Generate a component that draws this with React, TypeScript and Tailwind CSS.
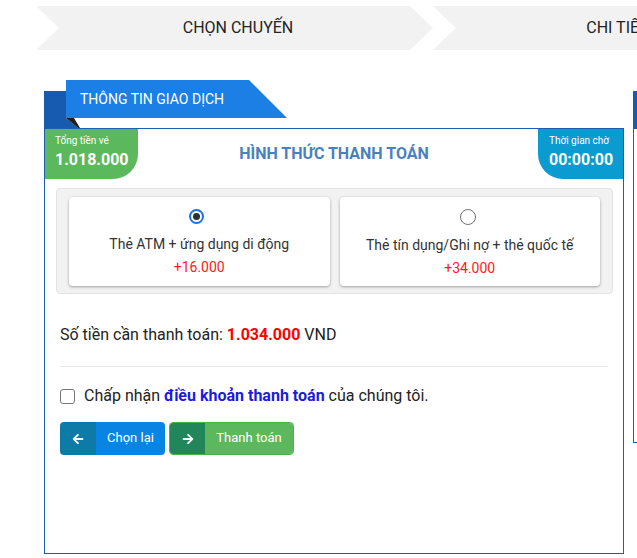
import React from "react";
import { FaArrowLeft, FaArrowRight } from "react-icons/fa";

function Chevron({ label, extra }: { label: string; extra?: boolean }) {
  return (
    <div
      className={
        extra
          ? "shrink-0 w-[397px] h-[44px] bg-[#f2f2f2] [clip-path:polygon(0_0,calc(100%_-_23px)_0,100%_50%,calc(100%_-_23px)_100%,0_100%,23px_50%)] flex items-center justify-center pl-[30px] pr-[35px] text-[16px] text-[#222] whitespace-nowrap"
          : "shrink-0 w-[397px] h-[44px] bg-[#f2f2f2] [clip-path:polygon(0_0,calc(100%_-_23px)_0,100%_50%,calc(100%_-_23px)_100%,0_100%,23px_50%)] flex items-center justify-center pl-[30px] pr-[23px] text-[16px] text-[#222] whitespace-nowrap"
      }
    >
      {label}
    </div>
  );
}

function Radio({ checked }: { checked: boolean }) {
  return checked ? (
    <span className="mr-[5px] w-[15px] h-[15px] rounded-full border-2 border-[#1a73e8] flex items-center justify-center bg-white">
      <span className="w-[7px] h-[7px] rounded-full bg-[#2b2f36]" />
    </span>
  ) : (
    <span className="mr-[4px] w-[16px] h-[16px] rounded-full border border-[#767676] bg-white" />
  );
}

function Card({ checked, label, fee }: { checked: boolean; label: string; fee: string }) {
  return (
    <div className="flex-1 h-[89px] bg-white rounded-[4px] shadow-[0_1px_3px_rgba(0,0,0,0.35)] flex flex-col items-center pt-[12px]">
      <Radio checked={checked} />
      <div className="mt-[9px] text-[14px] leading-[23px] text-[#333]">{label}</div>
      <div className="text-[14px] leading-[23px] text-[#ff1a1a]">{fee}</div>
    </div>
  );
}

export default function App() {
  return (
    <div className="w-[637px] h-[558px] overflow-hidden bg-white font-['Roboto','Liberation_Sans',sans-serif] text-[#333]">
      <div className="flex pt-[6px] pl-[36px]">
        <Chevron label="CHỌN CHUYẾN" />
        <Chevron label="CHI TIẾT VÉ" extra />
      </div>

      <div className="flex mt-[30px]">
        <div className="ml-[44px] w-[580px] shrink-0">
          <div className="flex h-[48px]">
            <div className="mt-[11px] w-[22px] h-[37px] bg-[#175bb0]" />
            <div className="flex flex-col">
              <div className="h-[38px] w-[221px] bg-[#1c7fe6] [clip-path:polygon(0_0,183px_0,100%_100%,0_100%)] flex items-center pl-[14px] text-white text-[14px] whitespace-nowrap">
                THÔNG TIN GIAO DỊCH
              </div>
              <svg width="14" height="10" viewBox="0 0 14 10" className="block">
                <polygon points="0,0 12,10 0,10" fill="#175bb0" />
                <polygon points="0,0 8,0 14,10 12,10" fill="#1f1f1f" />
              </svg>
            </div>
          </div>

          <div className="h-[426px] border border-[#1a5fb4]">
            <div className="grid grid-cols-[1fr_auto_1fr] items-center">
              <div className="justify-self-start w-[93px] h-[50px] bg-[#5cb85c] rounded-br-[25px] pl-[10px] pt-[6px] text-white">
                <div className="text-[10px] leading-[12px]">Tổng tiền vé</div>
                <div className="mt-[3px] text-[16px] leading-[20px] font-bold">1.018.000</div>
              </div>
              <div className="text-[16px] font-bold text-[#4a7fc1] whitespace-nowrap">HÌNH THỨC THANH TOÁN</div>
              <div className="justify-self-end w-[85px] h-[50px] bg-[#0a9bd0] rounded-bl-[25px] pl-[11px] pt-[6px] text-white">
                <div className="text-[10px] leading-[12px]">Thời gian chờ</div>
                <div className="mt-[3px] text-[16px] leading-[20px] font-bold">00:00:00</div>
              </div>
            </div>

            <div className="mt-[9px] ml-[11px] mr-[10px] bg-[#f2f2f2] border border-[#e3e3e3] rounded-[4px] px-[12px] pt-[8px] pb-[7px] flex gap-[10px]">
              <Card checked label="Thẻ ATM + ứng dụng di động" fee="+16.000" />
              <Card checked={false} label="Thẻ tín dụng/Ghi nợ + thẻ quốc tế" fee="+34.000" />
            </div>

            <div className="mt-[29px] px-[15px] text-[16px] leading-[24px] text-[#222]">
              Số tiền cần thanh toán: <span className="font-bold text-[#ff0000]">1.034.000</span> VND
            </div>

            <div className="mt-[19px] mx-[15px] border-t border-[#e6e6e6]" />

            <div className="mt-[17px] px-[15px] h-[24px] flex items-center gap-[9px] text-[16px] text-[#222]">
              <span className="w-[15px] h-[15px] rounded-[3px] border border-[#767676] bg-white shrink-0" />
              <span>
                Chấp nhận <span className="font-bold text-[#1a1ae6]">điều khoản thanh toán</span> của chúng tôi.
              </span>
            </div>

            <div className="mt-[14px] px-[15px] flex gap-[4px]">
              <div className="w-[105px] h-[33px] rounded-[4px] overflow-hidden flex text-white text-[13px]">
                <div className="w-[36px] bg-[#0d7aa8] flex items-center justify-center">
                  <FaArrowLeft size={12} />
                </div>
                <div className="flex-1 bg-[#0a84e3] flex items-center justify-center pb-[2px]">Chọn lại</div>
              </div>
              <div className="w-[125px] h-[33px] rounded-[4px] overflow-hidden flex text-white text-[13px] border border-[#4cae4c]">
                <div className="w-[35px] bg-[#21875a] flex items-center justify-center">
                  <FaArrowRight size={12} />
                </div>
                <div className="flex-1 bg-[#5cb85c] flex items-center justify-center pb-[2px]">Thanh toán</div>
              </div>
            </div>
          </div>
        </div>

        <div className="ml-[9px] mt-[11px] w-[200px] shrink-0">
          <div className="h-[38px] bg-[#175bb0]" />
          <div className="h-[314px] border-l border-b border-[#1a5fb4]" />
        </div>
      </div>
    </div>
  );
}
